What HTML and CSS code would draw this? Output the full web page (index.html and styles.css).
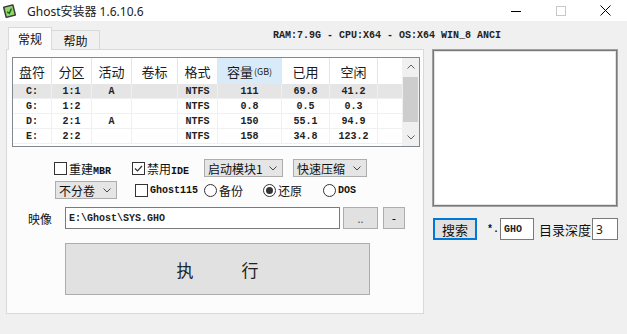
FILE: index.html
```html
<!DOCTYPE html>
<html>
<head>
<meta charset="utf-8">
<title>Ghost安装器</title>
<link rel="stylesheet" href="styles.css">
</head>
<body>
<div class="titlebar">
  <svg class="appicon" viewBox="0 0 16 16">
    <g transform="rotate(-14 8 8)">
      <rect x="2" y="2" width="11" height="12" rx="1" fill="#3b3b3b"/>
      <rect x="3.5" y="3.5" width="8" height="9" fill="#8fd66a"/>
      <path d="M5 8.2l1.8 1.8 3.2-4" stroke="#1d5e1d" stroke-width="1.4" fill="none"/>
    </g>
  </svg>
  <span class="title">Ghost安装器 1.6.10.6</span>
  <div class="ctrls">
    <span class="cbtn cmin"><svg width="10" height="10" viewBox="0 0 10 10"><path d="M0 5.5h10" stroke="#000" stroke-width="1"/></svg></span>
    <span class="cbtn cmax"><svg width="10" height="10" viewBox="0 0 10 10"><rect x="0.5" y="0.5" width="9" height="9" fill="none" stroke="#c8c8c8" stroke-width="1"/></svg></span>
    <span class="cbtn cclose"><svg width="11" height="11" viewBox="0 0 11 11"><path d="M0.5 0.5l10 10M10.5 0.5l-10 10" stroke="#000" stroke-width="1"/></svg></span>
  </div>
</div>

<div class="toprow">
  <div class="tabs">
    <div class="tab active">常规</div>
    <div class="tab">帮助</div>
  </div>
  <div class="sysinfo">RAM:7.9G - CPU:X64 - OS:X64 WIN_8 ANCI</div>
</div>

<div class="mainrow">
  <div class="panel">
    <div class="list">
      <div class="cols">
        <div class="hdr grid">
          <div class="hcell">盘符</div>
          <div class="hcell">分区</div>
          <div class="hcell">活动</div>
          <div class="hcell">卷标</div>
          <div class="hcell">格式</div>
          <div class="hcell sorted">容量<span class="gb">(GB)</span></div>
          <div class="hcell">已用</div>
          <div class="hcell">空闲</div>
          <div class="hcell filler"></div>
        </div>
        <div class="drow grid sel">
          <div class="dcell">C:</div><div class="dcell">1:1</div><div class="dcell">A</div><div class="dcell"></div><div class="dcell">NTFS</div><div class="dcell">111</div><div class="dcell">69.8</div><div class="dcell">41.2</div><div class="dcell filler"></div>
        </div>
        <div class="drow grid">
          <div class="dcell">G:</div><div class="dcell">1:2</div><div class="dcell"></div><div class="dcell"></div><div class="dcell">NTFS</div><div class="dcell">0.8</div><div class="dcell">0.5</div><div class="dcell">0.3</div><div class="dcell filler"></div>
        </div>
        <div class="drow grid">
          <div class="dcell">D:</div><div class="dcell">2:1</div><div class="dcell">A</div><div class="dcell"></div><div class="dcell">NTFS</div><div class="dcell">150</div><div class="dcell">55.1</div><div class="dcell">94.9</div><div class="dcell filler"></div>
        </div>
        <div class="drow grid">
          <div class="dcell">E:</div><div class="dcell">2:2</div><div class="dcell"></div><div class="dcell"></div><div class="dcell">NTFS</div><div class="dcell">158</div><div class="dcell">34.8</div><div class="dcell">123.2</div><div class="dcell filler"></div>
        </div>
      </div>
      <div class="vscroll">
        <div class="sbtn"><svg width="8" height="5" viewBox="0 0 8 5"><path d="M0.5 4.5l3.5-3.5 3.5 3.5" stroke="#606060" fill="none"/></svg></div>
        <div class="thumb"></div>
        <div class="sspace"></div>
        <div class="sbtn"><svg width="8" height="5" viewBox="0 0 8 5"><path d="M0.5 0.5l3.5 3.5 3.5-3.5" stroke="#606060" fill="none"/></svg></div>
      </div>
    </div>

    <div class="crow r1">
      <label class="chk w78"><span class="box"></span><span>重建<span class="m">MBR</span></span></label>
      <label class="chk w72"><span class="box"><svg width="11" height="11" viewBox="0 0 11 11"><path d="M2 5.5l2.5 2.5 4.5-5" stroke="#333" stroke-width="1.2" fill="none"/></svg></span><span>禁用<span class="m">IDE</span></span></label>
      <div class="combo cb1"><span>启动模块1</span><svg class="chev" width="8" height="5" viewBox="0 0 8 5"><path d="M0.5 0.5l3.5 3.5 3.5-3.5" stroke="#444" fill="none"/></svg></div>
      <div class="combo cb2"><span>快速压缩</span><svg class="chev" width="8" height="5" viewBox="0 0 8 5"><path d="M0.5 0.5l3.5 3.5 3.5-3.5" stroke="#444" fill="none"/></svg></div>
    </div>

    <div class="crow r2">
      <div class="combo cb3"><span>不分卷</span><svg class="chev" width="8" height="5" viewBox="0 0 8 5"><path d="M0.5 0.5l3.5 3.5 3.5-3.5" stroke="#444" fill="none"/></svg></div>
      <label class="chk w69"><span class="box"></span><span class="m">Ghost115</span></label>
      <label class="radio w59"><span class="dot"></span><span>备份</span></label>
      <label class="radio w60"><span class="dot on"></span><span>还原</span></label>
      <label class="radio"><span class="dot"></span><span class="m">DOS</span></label>
    </div>

    <div class="crow r3">
      <span class="lbl">映像</span>
      <div class="field path">E:\Ghost\SYS.GHO</div>
      <div class="btn dots">..</div>
      <div class="btn minus">-</div>
    </div>

    <div class="exec"><span>执</span><span>行</span></div>
  </div>

  <div class="side">
    <div class="logbox"></div>
    <div class="srow">
      <div class="btn search">搜索</div>
      <span class="star">*.</span>
      <div class="field ext">GHO</div>
      <span class="depthlbl">目录深度</span>
      <div class="field depth">3</div>
    </div>
  </div>
</div>
</body>
</html>
```

FILE: styles.css
```css
* { box-sizing: border-box; margin: 0; padding: 0; }
html, body { width: 627px; height: 334px; overflow: hidden; }
body {
  background: #f0f0f0;
  font-family: "Noto Sans CJK SC", "Noto Sans", sans-serif;
  font-size: 12px;
  color: #111;
}
.m { font-family: "Liberation Mono", monospace; font-size: 10px; font-weight: bold; }

.titlebar { height: 21px; background: #fff; display: flex; align-items: center; }
.appicon { width: 16px; height: 16px; margin-left: 2px; }
.title { margin-left: 9px; font-family: "Noto Sans", "Noto Sans CJK SC", sans-serif; font-size: 12px; color: #222; }
.ctrls { margin-left: auto; display: flex; height: 21px; }
.cbtn { display: flex; align-items: center; justify-content: center; }
.cmin, .cmax { width: 45px; }
.cclose { width: 44px; }

.toprow { height: 28px; display: flex; align-items: flex-end; padding-left: 8px; }
.tabs { display: flex; align-items: flex-end; }
.tab {
  height: 19px; width: 48px;
  border: 1px solid #d9d9d9; border-bottom: none; border-left: none;
  background: #f0f0f0;
  display: flex; align-items: center; justify-content: center;
  font-size: 12px;
}
.tab.active {
  width: 44px; height: 23px; border-left: 1px solid #d9d9d9;
  background: #fcfcfc; position: relative; z-index: 1; margin-bottom: -1px;
  padding-bottom: 2px;
}
.sysinfo {
  align-self: center; margin-left: 173px; margin-top: 1px;
  font-family: "Liberation Mono", monospace; font-size: 10px; font-weight: bold; color: #222;
  white-space: pre;
}

.mainrow { display: flex; padding-left: 6px; }
.panel {
  width: 418px; height: 265px;
  border: 1px solid #d9d9d9; background: #fcfcfc;
  display: flex; flex-direction: column;
}

.list {
  margin: 7px 0 0 5px; width: 408px; height: 90px;
  border: 1px solid #828790; background: #fff; display: flex;
}
.cols { flex: 1; display: flex; flex-direction: column; }
.grid { display: grid; grid-template-columns: 39px 40px 40px 46px 40px 64px 48px 48px 1fr; }
.hdr { height: 26px; }
.hcell {
  display: flex; align-items: center; justify-content: center;
  border-right: 1px solid #e5e5e5; font-size: 13px; color: #1a1a1a;
}
.hcell.sorted { background: #d9ebf9; }
.hcell.filler, .dcell.filler { border-right: none; }
.gb { font-size: 9px; margin-left: 1px; }
.drow { height: 15px; border-bottom: 1px solid #f0f0f0; }
.drow.sel { background: #e5e5e5; }
.dcell {
  display: flex; align-items: center; justify-content: center;
  border-right: 1px solid #f0f0f0;
  font-family: "Liberation Mono", monospace; font-size: 10px; font-weight: bold; color: #222;
}
.vscroll { width: 17px; background: #f0f0f0; display: flex; flex-direction: column; }
.sbtn { height: 17px; display: flex; align-items: center; justify-content: center; }
.thumb { height: 45px; margin: 2px 1px 0 1px; background: #cdcdcd; }
.sspace { flex: 1; }

.crow { display: flex; align-items: center; }
.r1 { margin-top: 12px; height: 18px; padding-left: 47px; }
.r2 { margin-top: 4px; height: 18px; padding-left: 48px; }
.r3 { margin-top: 8px; height: 22px; padding-left: 21px; }

.chk, .radio { display: flex; align-items: center; gap: 2px; font-size: 12px; }
.box {
  width: 13px; height: 13px; border: 1px solid #333; background: #fff;
  display: flex; align-items: center; justify-content: center;
}
.dot {
  width: 13px; height: 13px; border: 1px solid #333; border-radius: 50%; background: #fff;
  display: flex; align-items: center; justify-content: center;
}
.dot.on::after { content: ""; width: 7px; height: 7px; border-radius: 50%; background: #333; }
.w78 { width: 78px; }
.w72 { width: 72px; }
.w69 { width: 69px; }
.w59 { width: 59px; }
.w60 { width: 60px; }

.combo {
  height: 18px; border: 1px solid #adadad; background: #e5e5e5;
  display: flex; align-items: center; justify-content: space-between;
  padding: 0 5px 0 3px; font-size: 12px;
}
.cb1 { width: 79px; margin-right: 10px; }
.cb2 { width: 74px; }
.cb3 { width: 62px; margin-right: 18px; }

.lbl { width: 37px; font-size: 12px; }
.field {
  height: 22px; border: 1px solid #7a7a7a; background: #fff;
  display: flex; align-items: center; padding-left: 3px;
  font-family: "Liberation Mono", monospace; font-size: 10px; font-weight: bold; color: #222;
}
.path { width: 275px; }
.btn {
  height: 22px; border: 1px solid #adadad; background: #e1e1e1;
  display: flex; align-items: center; justify-content: center;
}
.dots { width: 35px; margin-left: 3px; font-size: 11px; color: #555; }
.minus { width: 22px; margin-left: 5px; font-family: "Noto Sans", sans-serif; font-size: 12px; }

.exec {
  margin: 14px 0 0 58px; width: 305px; height: 52px;
  border: 1px solid #adadad; background: #e1e1e1;
  display: flex; align-items: center; justify-content: center; gap: 48px;
  font-size: 17px; color: #222;
}

.side { margin-left: 8px; width: 186px; }
.logbox {
  height: 158px; background: #fff;
  border: 1px solid #a0a0a0; box-shadow: inset 0 0 0 1px #7a7a7a, inset 0 0 0 2px #e3e3e3;
}
.srow { margin-top: 11px; height: 22px; display: flex; align-items: center; }
.search {
  width: 44px; margin-left: 1px; border: 1px solid #0078d7;
  box-shadow: inset 0 0 0 1px #0078d7; font-size: 13px;
}
.star { margin-left: 10px; width: 12px; font-family: "Liberation Mono", monospace; font-size: 10px; font-weight: bold; }
.ext { width: 34px; margin-left: 1px; }
.depthlbl { margin-left: 5px; width: 52px; font-size: 13px; }
.depth { width: 26px; margin-left: 1px; font-family: "Noto Sans", sans-serif; font-weight: normal; font-size: 12px; }
```
